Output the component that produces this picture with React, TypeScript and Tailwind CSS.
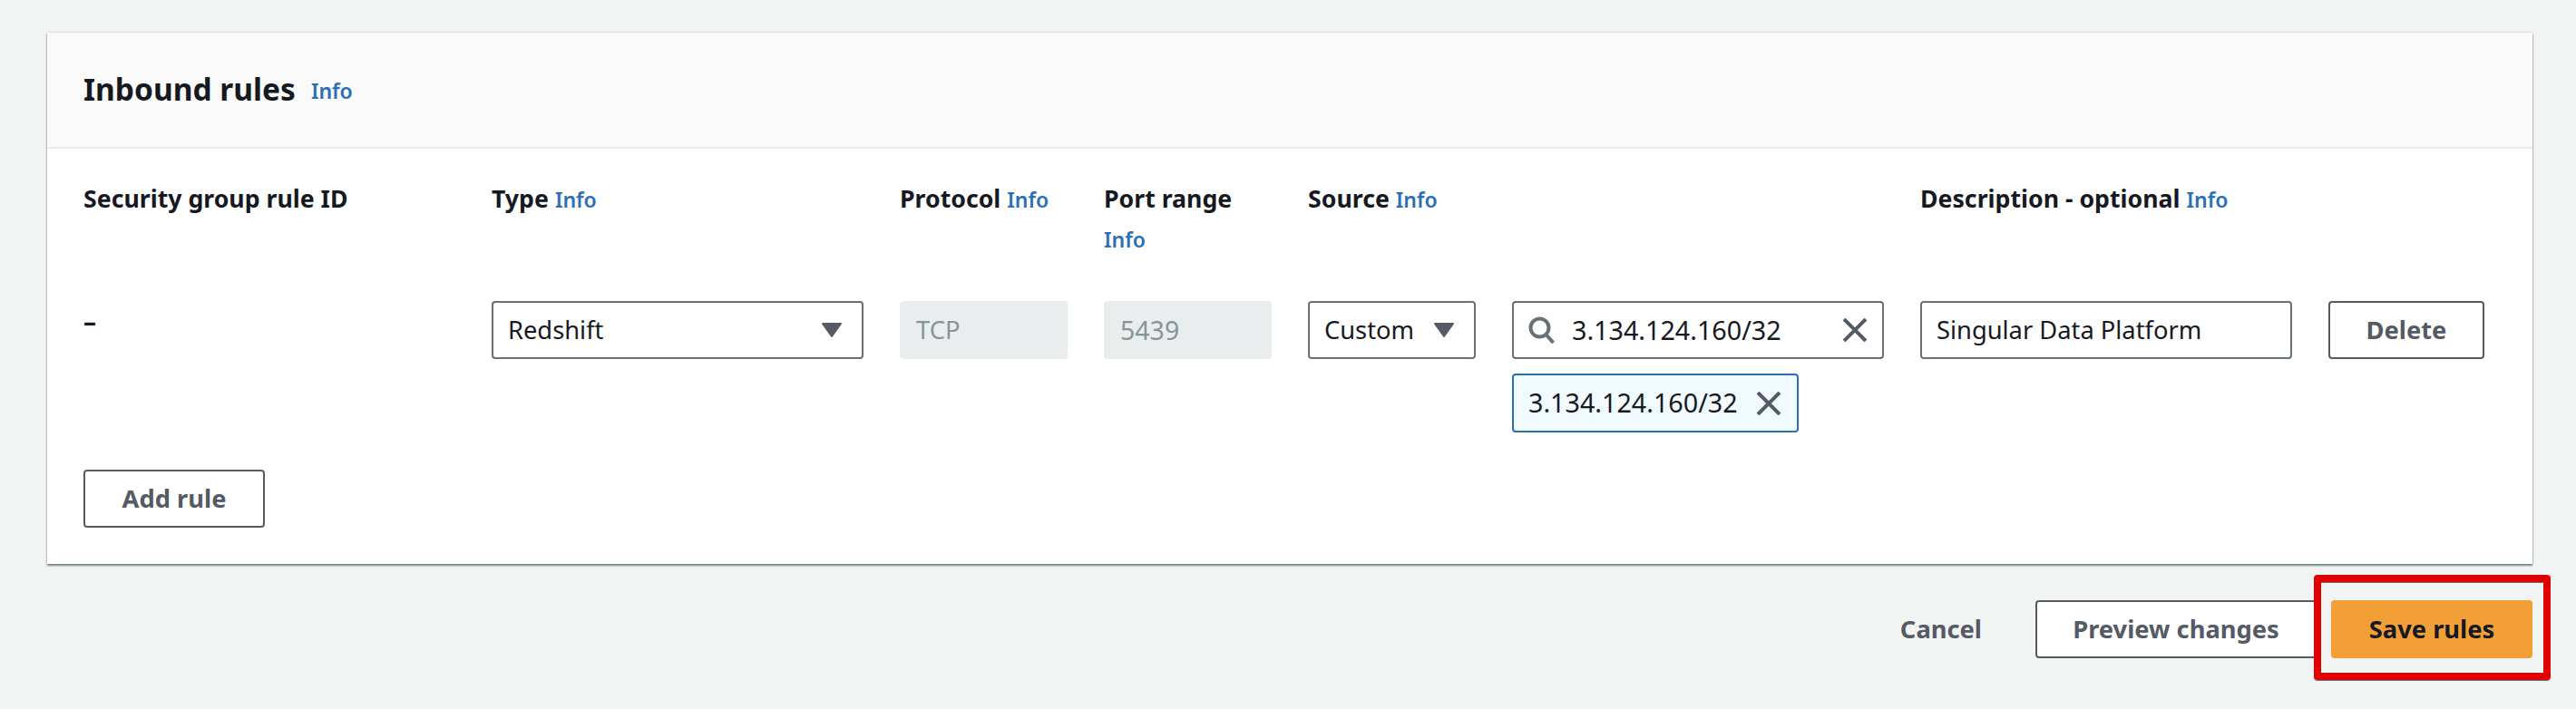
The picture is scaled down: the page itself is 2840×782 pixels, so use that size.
const font = "[font-family:'Noto_Sans',sans-serif]";

function Info({ className = "ml-[7px]" }: { className?: string }) {
  return <a className={`${className} text-[23px] font-semibold leading-none text-[#2b6fb5]`}>Info</a>;
}

function Caret() {
  return (
    <svg width="22" height="16" viewBox="0 0 22 16" className="shrink-0">
      <path d="M1 1h20L11 15z" fill="#545b64" stroke="#545b64" strokeWidth="2" strokeLinejoin="round" />
    </svg>
  );
}

function Close() {
  return (
    <svg width="28" height="26" viewBox="0 0 28 26" className="shrink-0" fill="none" stroke="#545b64" strokeWidth="4">
      <path d="M2 1l24 24M26 1L2 25" />
    </svg>
  );
}

function SearchGlyph() {
  return (
    <svg width="30" height="30" viewBox="0 0 30 30" className="shrink-0" fill="none" stroke="#687078" strokeWidth="4">
      <circle cx="12.5" cy="12.5" r="10" />
      <path d="M19.5 20l8 9" />
    </svg>
  );
}

const box = "h-[64px] flex items-center rounded-[4px] leading-none";
const field = `${box} border-2 border-[#687078] bg-white px-[16px] text-[27.3px] text-[#16191f]`;
const disabled = `${box} bg-[#eaeded] px-[18px] text-[#879596]`;
const secondary =
  "h-[64px] flex items-center justify-center rounded-[4px] border-2 border-[#545b64] bg-white text-[27.3px] font-bold text-[#545b64]";
const label = "text-[26.7px] font-bold";

export default function App() {
  return (
    <div className={`${font} h-[782px] w-full overflow-hidden bg-[#f2f3f3] pl-[52px] pr-[48px] pt-[36px]`}>
      {/* Card */}
      <section className="bg-white shadow-[0_2px_2px_rgba(0,28,36,0.5),0_0_2px_rgba(0,28,36,0.25)]">
        <header className="flex h-[128px] items-center border-b-2 border-[#eaeded] bg-[#fafafa] pl-[40px]">
          <h2 className="text-[33.5px] font-bold leading-none text-[#16191f]">Inbound rules</h2>
          <Info className="ml-[17px] mt-[2px]" />
        </header>

        <div className="px-[40px] pb-[40px] pt-[33px]">
          <div className="grid grid-cols-[410px_410px_185px_185px_185px_410px_410px_172px] gap-x-[40px] gap-y-[47px] leading-[44px] text-[#16191f]">
            {/* Labels */}
            <div className={`${label} h-[88px]`}>Security group rule ID</div>
            <div className={label}>Type<Info /></div>
            <div className={label}>Protocol<Info /></div>
            <div className={label}>Port range<div><Info className="ml-0" /></div></div>
            <div className={label}>Source<Info /></div>
            <div />
            <div className={label}>Description - optional<Info /></div>
            <div />

            {/* Rule row */}
            <div className="text-[28px] font-bold">–</div>
            <div className={`${field} justify-between pr-[22px]`}>
              <span>Redshift</span>
              <Caret />
            </div>
            <div className={`${disabled} text-[27.3px]`}>TCP</div>
            <div className={`${disabled} text-[28.5px]`}>5439</div>
            <div className={`${field} justify-between pr-[22px]`}>
              <span>Custom</span>
              <Caret />
            </div>
            <div className="flex flex-col items-start gap-y-[16px]">
              <div className={`${field} w-full pr-[16px]`}>
                <SearchGlyph />
                <span className="ml-[18px] flex-1 text-[28.7px]">3.134.124.160/32</span>
                <Close />
              </div>
              <div className="flex h-[65px] w-[316px] items-center rounded-[4px] border-2 border-[#2b6fb5] bg-[#f1faff] pl-[16px] text-[28.7px] leading-none">
                <span className="flex-1">3.134.124.160/32</span>
                <span className="mr-[17px]"><Close /></span>
              </div>
            </div>
            <div className={field}>Singular Data Platform</div>
            <button className={`${secondary} w-[172px]`}>Delete</button>
          </div>

          <button className={`${secondary} mt-[41px] w-[200px]`}>Add rule</button>
        </div>
      </section>

      {/* Actions */}
      <div className="mt-[40px] flex items-center justify-end">
        <button className="mr-[59px] text-[27.3px] font-bold text-[#545b64]">Cancel</button>
        <button className={`${secondary} w-[310px]`}>Preview changes</button>
        <div className="relative ml-[16px]">
          <button className="flex h-[64px] w-[222px] items-center justify-center rounded-[4px] bg-[#f29f38] text-[27.3px] font-bold text-[#16191f]">
            Save rules
          </button>
          <div className="absolute -bottom-[24px] -left-[19px] -right-[20px] -top-[28px] rounded-[4px] border-[8px] border-[#e00000] shadow-[inset_0_1px_0_#687078,0_1px_0_#687078]" />
        </div>
      </div>
    </div>
  );
}
